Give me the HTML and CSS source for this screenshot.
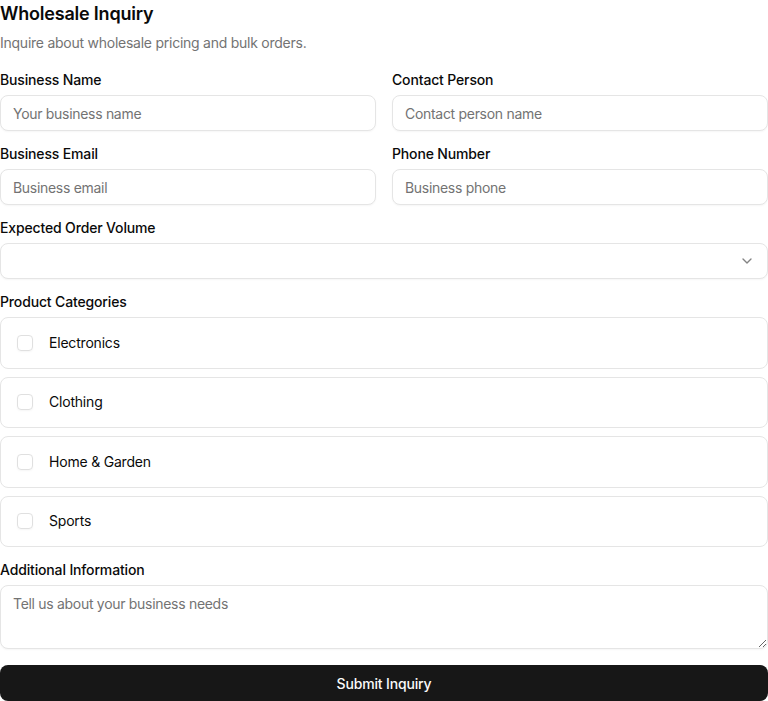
FILE: index.html
```html
<!DOCTYPE html>
<html lang="en">
<head>
<meta charset="utf-8">
<title>Wholesale Inquiry</title>
<link rel="stylesheet" href="styles.css">
</head>
<body>
<div class="page">
  <header class="head">
    <h1 class="title">Wholesale Inquiry</h1>
    <p class="subtitle">Inquire about wholesale pricing and bulk orders.</p>
  </header>
  <form class="form">
    <div class="grid2">
      <div class="field">
        <label class="label">Business Name</label>
        <input class="input" type="text" placeholder="Your business name">
      </div>
      <div class="field">
        <label class="label">Contact Person</label>
        <input class="input" type="text" placeholder="Contact person name">
      </div>
    </div>
    <div class="grid2">
      <div class="field">
        <label class="label">Business Email</label>
        <input class="input" type="email" placeholder="Business email">
      </div>
      <div class="field">
        <label class="label">Phone Number</label>
        <input class="input" type="tel" placeholder="Business phone">
      </div>
    </div>
    <div class="field">
      <label class="label">Expected Order Volume</label>
      <button type="button" class="select">
        <span></span>
        <svg class="chev" width="16" height="16" viewBox="0 0 24 24" fill="none" stroke="currentColor" stroke-width="2" stroke-linecap="round" stroke-linejoin="round"><path d="m6 9 6 6 6-6"/></svg>
      </button>
    </div>
    <div class="field">
      <label class="label">Product Categories</label>
      <div class="cats">
        <label class="cat"><span class="box"></span><span class="cat-text">Electronics</span></label>
        <label class="cat"><span class="box"></span><span class="cat-text">Clothing</span></label>
        <label class="cat"><span class="box"></span><span class="cat-text">Home &amp; Garden</span></label>
        <label class="cat"><span class="box"></span><span class="cat-text">Sports</span></label>
      </div>
    </div>
    <div class="field">
      <label class="label">Additional Information</label>
      <textarea class="textarea" placeholder="Tell us about your business needs"></textarea>
    </div>
    <button type="button" class="submit">Submit Inquiry</button>
  </form>
</div>
</body>
</html>
```

FILE: styles.css
```css
* { box-sizing: border-box; }
html, body { margin: 0; padding: 0; background: #ffffff; }
body {
  font-family: Inter, "Noto Sans", "Liberation Sans", sans-serif;
  color: #0a0a0a;
  -webkit-font-smoothing: antialiased;
}
.page { width: 768px; }
.head { display: flex; flex-direction: column; gap: 5px; }
.title {
  margin: 0;
  font-size: 18px;
  line-height: 28px;
  font-weight: 600;
  letter-spacing: -0.2px;
}
.subtitle {
  margin: 0;
  font-size: 14px;
  line-height: 20px;
  color: #737373;
  letter-spacing: -0.25px;
}
.form {
  margin-top: 20px;
  display: flex;
  flex-direction: column;
  gap: 16px;
}
.grid2 {
  display: grid;
  grid-template-columns: 1fr 1fr;
  gap: 16px;
}
.field { display: flex; flex-direction: column; gap: 8px; }
.label {
  font-size: 14px;
  line-height: 14px;
  font-weight: 500;
  letter-spacing: -0.15px;
}
.input, .select, .textarea {
  font-family: inherit;
  width: 100%;
  border: 1px solid #e5e5e5;
  border-radius: 8px;
  background: #fff;
  font-size: 14px;
  color: #0a0a0a;
  letter-spacing: -0.3px;
  box-shadow: 0 1px 2px rgba(0,0,0,0.04);
  outline: none;
}
.input {
  height: 36px;
  padding: 0 12px;
}
.input::placeholder, .textarea::placeholder { color: #737373; }
.select {
  height: 36px;
  padding: 0 12px;
  display: flex;
  align-items: center;
  justify-content: space-between;
}
.chev { color: #0a0a0a; opacity: 0.5; width: 16px; height: 16px; }
.cats { display: flex; flex-direction: column; gap: 8px; }
.cat {
  display: flex;
  align-items: center;
  gap: 16px;
  height: 51.5px;
  padding: 0 16px;
  border: 1px solid #e5e5e5;
  border-radius: 8px;
  font-size: 14px;
  line-height: 20px;
  letter-spacing: -0.2px;
}
.box {
  width: 16px;
  height: 16px;
  border: 1px solid #e0e0e0;
  border-radius: 4px;
  flex: none;
  box-shadow: 0 1px 2px rgba(0,0,0,0.04);
}
.textarea {
  height: 64px;
  padding: 8px 12px;
  line-height: 20px;
  resize: vertical;
  display: block;
}
.submit {
  font-family: inherit;
  height: 36px;
  width: 100%;
  border: none;
  border-radius: 8px;
  background: #171717;
  color: #fafafa;
  font-size: 14px;
  font-weight: 500;
  letter-spacing: -0.15px;
}
```
